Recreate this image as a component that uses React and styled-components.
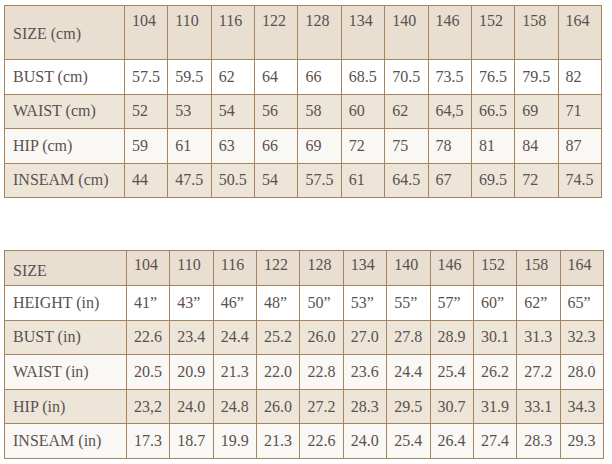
import styled, { createGlobalStyle } from 'styled-components';

const GlobalStyle = createGlobalStyle`
  html, body {
    margin: 0;
    padding: 0;
    background: #ffffff;
  }
`;

const Page = styled.div`
  padding: 5px 8px 0 4px;
  display: flex;
  flex-direction: column;
  gap: 52px;
  font-family: "Liberation Serif", "DejaVu Serif", serif;
  color: #5a5150;
`;

const Table = styled.table`
  width: ${p => p.$width}px;
  border-collapse: collapse;
  table-layout: fixed;
  font-size: 16px;
  line-height: 18px;
`;

const Row = styled.tr`
  background: ${p => p.$bg};
`;

const Cell = styled.td`
  box-sizing: border-box;
  border: 1px solid #a5845f;
  padding: ${p => (p.$head ? `${p.$pt}px 0 0 7px` : '0 0 0 7px')};
  height: ${p => p.$h}px;
  vertical-align: ${p => (p.$head ? 'top' : 'middle')};
  white-space: nowrap;
  overflow: hidden;
`;

const LabelCell = styled(Cell)`
  padding: ${p => p.$lpt || 0}px 0 0 8px;
  vertical-align: middle;
`;

const sizes = ['104', '110', '116', '122', '128', '134', '140', '146', '152', '158', '164'];

const BEIGE = '#e8dfd0';
const LIGHT = '#ede5d8';
const WHITE = '#ffffff';
const OFF = '#faf8f5';

const cmRows = [
  { label: 'BUST (cm)', bg: WHITE, values: ['57.5', '59.5', '62', '64', '66', '68.5', '70.5', '73.5', '76.5', '79.5', '82'] },
  { label: 'WAIST (cm)', bg: LIGHT, values: ['52', '53', '54', '56', '58', '60', '62', '64,5', '66.5', '69', '71'] },
  { label: 'HIP (cm)', bg: OFF, values: ['59', '61', '63', '66', '69', '72', '75', '78', '81', '84', '87'] },
  { label: 'INSEAM (cm)', bg: LIGHT, values: ['44', '47.5', '50.5', '54', '57.5', '61', '64.5', '67', '69.5', '72', '74.5'] },
];

const inRows = [
  { label: 'HEIGHT (in)', bg: WHITE, values: ['41”', '43”', '46”', '48”', '50”', '53”', '55”', '57”', '60”', '62”', '65”'] },
  { label: 'BUST (in)', bg: LIGHT, values: ['22.6', '23.4', '24.4', '25.2', '26.0', '27.0', '27.8', '28.9', '30.1', '31.3', '32.3'] },
  { label: 'WAIST (in)', bg: OFF, values: ['20.5', '20.9', '21.3', '22.0', '22.8', '23.6', '24.4', '25.4', '26.2', '27.2', '28.0'] },
  { label: 'HIP (in)', bg: LIGHT, values: ['23,2', '24.0', '24.8', '26.0', '27.2', '28.3', '29.5', '30.7', '31.9', '33.1', '34.3'] },
  { label: 'INSEAM (in)', bg: OFF, values: ['17.3', '18.7', '19.9', '21.3', '22.6', '24.0', '25.4', '26.4', '27.4', '28.3', '29.3'] },
];

function SizeTable({ width, firstCol, title, headHeight, headPad, titlePad, rowHeight, rows }) {
  return (
    <Table $width={width}>
      <colgroup>
        <col style={{ width: firstCol }} />
        {sizes.map(s => <col key={s} />)}
      </colgroup>
      <tbody>
        <Row $bg={BEIGE}>
          <LabelCell $h={headHeight} $lpt={titlePad}>{title}</LabelCell>
          {sizes.map(s => (
            <Cell key={s} $head $pt={headPad} $h={headHeight}>{s}</Cell>
          ))}
        </Row>
        {rows.map(r => (
          <Row key={r.label} $bg={r.bg}>
            <LabelCell $h={rowHeight}>{r.label}</LabelCell>
            {r.values.map((v, i) => (
              <Cell key={i} $h={rowHeight}>{v}</Cell>
            ))}
          </Row>
        ))}
      </tbody>
    </Table>
  );
}

export default function App() {
  return (
    <>
      <GlobalStyle />
      <Page>
        <SizeTable
          width={598}
          firstCol={120}
          title="SIZE (cm)"
          headHeight={54}
          headPad={6}
          titlePad={2}
          rowHeight={34.5}
          rows={cmRows}
        />
        <SizeTable
          width={600}
          firstCol={122}
          title="SIZE"
          headHeight={35}
          headPad={5}
          titlePad={6}
          rowHeight={34.6}
          rows={inRows}
        />
      </Page>
    </>
  );
}
